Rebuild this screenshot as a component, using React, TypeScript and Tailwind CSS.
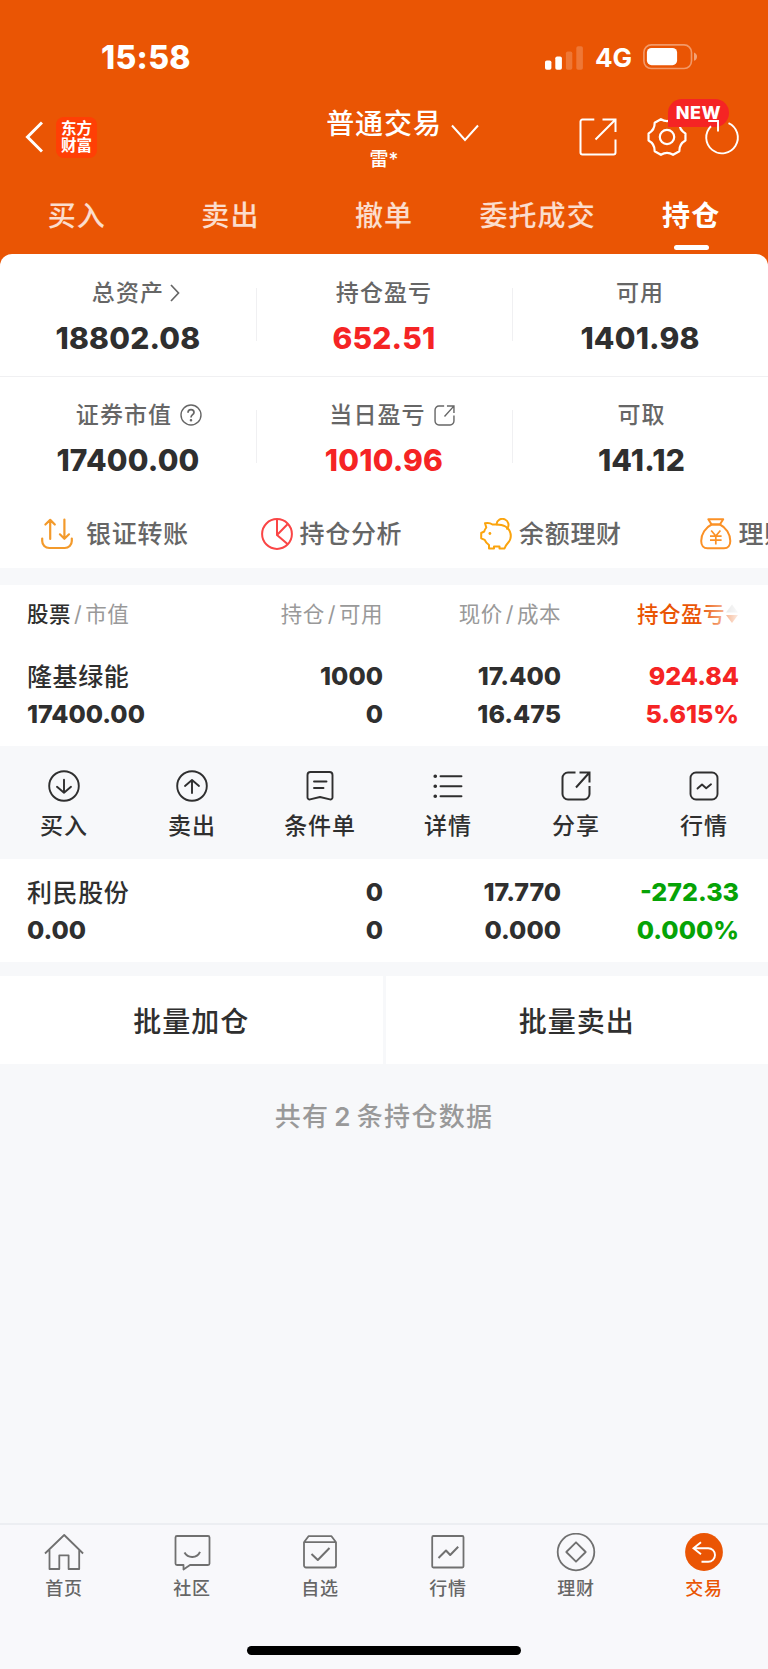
import type { ReactNode } from "react";
import { clsx } from "clsx";

const tabs = ["买入", "卖出", "撤单", "委托成交", "持仓"];

/* ---------- icons ---------- */

const Signal = () => (
  <svg width="38" height="24" viewBox="0 0 38 24" fill="#fff">
    <rect x="0" y="14.5" width="6.4" height="9.2" rx="1.8" />
    <rect x="10.3" y="10.5" width="6.6" height="13.2" rx="1.8" />
    <rect x="20.9" y="5.4" width="6.4" height="18.3" rx="1.8" opacity=".2" />
    <rect x="31.3" y="0.2" width="6.6" height="23.5" rx="1.8" opacity=".2" />
  </svg>
);

const Battery = () => (
  <svg width="54" height="26" viewBox="0 0 54 26">
    <rect x="0.9" y="0.9" width="47.6" height="23.6" rx="7.4" fill="none" stroke="#fff" strokeOpacity=".4" strokeWidth="1.6" />
    <rect x="3.9" y="4" width="30.2" height="17.2" rx="4.6" fill="#fff" />
    <path d="M51 8.600c2 .8 3 2.200 3 4.100s-1 3.300-3 4.100z" fill="#fff" opacity=".45" />
  </svg>
);

const ShareSquare = () => (
  <svg width="38" height="38" viewBox="0 0 38 38" fill="none" stroke="#fff" strokeWidth="2">
    <path d="M15.300 1.500H3.500a2 2 0 0 0-2 2v31a2 2 0 0 0 2 2h31a2 2 0 0 0 2-2V21.500" />
    <path d="M23.500 1.500h13v12.500M36 2L16.500 21.500" />
  </svg>
);

const polar = (deg: number, r: number) => {
  const a = (deg * Math.PI) / 180;
  return `${(r * Math.cos(a)).toFixed(2)} ${(r * Math.sin(a)).toFixed(2)}`;
};

// six wide teeth joined by shallow curved valleys
const gearPath =
  `M${polar(-11, 18.8)}` +
  [0, 60, 120, 180, 240, 300].map((a) => `L${polar(a + 11, 18.8)}Q${polar(a + 30, 14)} ${polar(a + 49, 18.8)}`).join("") +
  "Z";

const Gear = () => (
  <svg width="40" height="40" viewBox="-20 -20 40 40" fill="none" stroke="#fff" strokeWidth="2.200" strokeLinejoin="round">
    <path d={gearPath} />
    <circle r="7.200" />
  </svg>
);

const Refresh = () => (
  <svg width="38" height="38" viewBox="0 0 38 38" fill="none" stroke="#fff" strokeWidth="1.900">
    <path d="M25.500 5.100A15.800 15.800 0 1 1 8 8.200" />
    <path d="M5.200 3H15v10.500" />
  </svg>
);

const ShareRound = ({ size, stroke }: { size: number; stroke: string }) => (
  <svg width={size} height={size} viewBox="0 0 30 30" fill="none" stroke={stroke} strokeWidth="2">
    <path d="M14.500 1.500H7A5.500 5.500 0 0 0 1.500 7v16A5.500 5.500 0 0 0 7 28.500h16a5.500 5.500 0 0 0 5.500-5.500v-8" />
    <path d="M18.500 1.500h10v10M28 2L15 16.500" />
  </svg>
);

const Question = () => (
  <svg width="22" height="22" viewBox="0 0 22 22" fill="none" stroke="#666" strokeWidth="1.400">
    <circle cx="11" cy="11" r="10" />
    <path d="M8 8.800C8 6.800 9.200 5.700 11 5.700s3 1.100 3 2.700c0 2.200-3 2.500-3 5" strokeWidth="1.700" />
    <circle cx="11" cy="16.200" r=".6" fill="#666" />
  </svg>
);

const Transfer = () => (
  <svg width="32" height="32" viewBox="0 0 32 32" fill="none" stroke="#f39a2b" strokeWidth="2.200" strokeLinecap="round" strokeLinejoin="round">
    <path d="M4.400 6.500L9.200 1.900l4.600 4.600M9.200 2v19M23.400 1.500v19M18.900 16.300l4.500 4.500 4.600-4.500" />
    <path d="M1.200 20.500v2.500a7 7 0 0 0 7 7h15.600a7 7 0 0 0 7-7v-2.500" />
  </svg>
);

const Pie = () => (
  <svg width="32" height="32" viewBox="0 0 32 32" fill="none" stroke="#fa4545" strokeWidth="2">
    <circle cx="16" cy="16" r="14.900" />
    <path d="M16 1v16l10.800 9.300M16 17L26.500 6.300" />
  </svg>
);

const Piggy = () => (
  <svg width="32" height="32" viewBox="0 0 32 32" fill="none" stroke="#fba40d" strokeWidth="2" strokeLinejoin="round" strokeLinecap="round">
    <path d="M16 6.500h-3.500C10.500 5 8.500 4.500 5 5.200l1.300 4.300c-1 1.300-1.700 2.500-2.100 4L1.200 15v5.300l3.500 1.500c1 2.500 2.500 4 4.300 5.200v3.500h5V28.600h5.500v1.900h5c.7-2 1.500-3.500 3-5 2-2 3.300-4.500 3.300-7.500 0-4-2-7.300-5.300-9.500C22.500 6.700 20 6.500 16 6.500z" />
    <path d="M16.500 6.300a6 6 0 1 1 10.500 4.500" />
    <circle cx="9.900" cy="15.500" r="1.400" fill="#fba40d" stroke="none" />
  </svg>
);

const MoneyBag = () => (
  <svg width="32" height="32" viewBox="0 0 32 32" fill="none" stroke="#fb9126" strokeWidth="2" strokeLinejoin="round">
    <path d="M8.300 1.300h14.900l-3.300 5.200h-8.300z" />
    <path d="M11.600 6.500C5.500 9.500 1.200 16 1.200 23c0 4.300 2.300 7.300 6.300 7.300h16.500c4 0 6.300-3 6.300-7.300 0-7-4.300-13.500-10.400-16.500z" />
    <path d="M11.200 12.500l4.600 5.500 4.600-5.500M10 18.200h11.600M10 22.200h11.600M15.800 18v8.500" strokeWidth="1.700" />
  </svg>
);

const Box32 = ({ children }: { children: ReactNode }) => (
  <svg width="32" height="32" viewBox="0 0 32 32" fill="none" stroke="#2f2f2f" strokeWidth="1.900" strokeLinecap="round" strokeLinejoin="round">
    {children}
  </svg>
);

const Nav40 = ({ children }: { children: ReactNode }) => (
  <svg width="40" height="40" viewBox="0 0 40 40" fill="none" stroke="#707070" strokeWidth="1.800" strokeLinejoin="round">
    {children}
  </svg>
);

/* ---------- data ---------- */

const shortcuts = [
  { label: "银证转账", icon: <Transfer />, gap: "gap-[13px]" },
  { label: "持仓分析", icon: <Pie />, gap: "gap-[7px]" },
  { label: "余额理财", icon: <Piggy />, gap: "gap-[7px]" },
  { label: "理财", icon: <MoneyBag />, gap: "gap-[7px]" },
];

const actions = [
  {
    label: "买入",
    icon: <Box32><circle cx="16" cy="16" r="14.800" /><path d="M16 9.800v13M9 16.800l7 6 7-6" /></Box32>,
  },
  {
    label: "卖出",
    icon: <Box32><circle cx="16" cy="16" r="14.800" /><path d="M16 23V10M9 16l7-6 7 6" /></Box32>,
  },
  {
    label: "条件单",
    icon: (
      <Box32>
        <path d="M6.500 2h19a3 3 0 0 1 3 3v22.500a2 2 0 0 1-2.600 1.900L16 27l-9.900 2.400a2 2 0 0 1-2.600-1.900V5a3 3 0 0 1 3-3z" />
        <path d="M10 11.500h12.500M10 18h9.500" />
      </Box32>
    ),
  },
  {
    label: "详情",
    icon: (
      <Box32>
        <path d="M8.500 6.200h21M8.500 16.200h21M8.500 26.200h21" />
        <path d="M3.200 6.200h.1M3.200 16.200h.1M3.200 26.200h.1" strokeWidth="3.600" />
      </Box32>
    ),
  },
  { label: "分享", icon: <ShareRound size={30} stroke="#2f2f2f" /> },
  {
    label: "行情",
    icon: (
      <Box32>
        <rect x="2.500" y="2.500" width="27" height="27" rx="5.500" />
        <path d="M9.500 18.500l4.500-4 4.200 3.800 4.800-4" />
      </Box32>
    ),
  },
];

const navItems = [
  { label: "首页", icon: <Nav40><path d="M1 20.500L20.200 2l18.900 18.500M5.500 17v19h9.800V22.300h9.300V36h10.600V17" /></Nav40> },
  {
    label: "社区",
    icon: (
      <Nav40>
        <path d="M5 3h31a1.500 1.500 0 0 1 1.500 1.500v26A1.500 1.500 0 0 1 36 32H18l-6.500 4.500V32H5a1.500 1.500 0 0 1-1.500-1.500v-26A1.500 1.500 0 0 1 5 3z" />
        <path d="M12.500 19.500c3.500 6 12.500 6 15.500-.7" strokeWidth="2" />
      </Nav40>
    ),
  },
  {
    label: "自选",
    icon: (
      <Nav40>
        <path d="M4 9.200L8.500 3.200h23L36 9.200V32.500a2 2 0 0 1-2 2H6a2 2 0 0 1-2-2zM4 9.200h32" />
        <path d="M11.500 21l6.300 6L29.500 15" strokeWidth="2" />
      </Nav40>
    ),
  },
  {
    label: "行情",
    icon: (
      <Nav40>
        <rect x="4.200" y="3" width="31.300" height="31.500" rx="1.200" />
        <path d="M10.500 25l7.500-7.500 4.200 4.500 8-8.300" strokeWidth="2" />
      </Nav40>
    ),
  },
  {
    label: "理财",
    icon: <Nav40><circle cx="20" cy="19" r="18.300" /><path d="M20 9.300l9.700 9.700-9.700 9.700L10.300 19z" /></Nav40>,
  },
  {
    label: "交易",
    active: true,
    icon: (
      <svg width="40" height="40" viewBox="0 0 40 40" fill="none" stroke="#fff" strokeWidth="1.900">
        <circle cx="20" cy="19" r="18.900" fill="#ea5504" stroke="none" />
        <path d="M17 9.300L9.500 15.200l7.500 6M9.500 15.200h14.700a6.800 6.800 0 0 1 0 13.600h-6.700" />
      </svg>
    ),
  },
];

const holdings = [
  { name: "隆基绿能", value: "17400.00", qty: "1000", avail: "0", price: "17.400", cost: "16.475", pl: "924.84", pct: "5.615%", color: "text-[#f52424]" },
  { name: "利民股份", value: "0.00", qty: "0", avail: "0", price: "17.770", cost: "0.000", pl: "-272.33", pct: "0.000%", color: "text-[#06a306]" },
];

/* ---------- pieces ---------- */

function Stat({ label, value, red, icon, shift }: { label: string; value: string; red?: boolean; icon?: ReactNode; shift?: string }) {
  return (
    <div className="flex flex-col items-center">
      <div className={clsx("flex h-[22px] items-center text-[23px] font-medium leading-[22px] tracking-[1.100px] text-[#666]", shift)}>
        {label}
        {icon}
      </div>
      <div className={clsx("mt-[22px] text-[30px] font-extrabold leading-[24px] tracking-[0.200px]", red ? "text-[#f52424]" : "text-[#2f2f2f]")}>{value}</div>
    </div>
  );
}

const Slash = () => <span className="mx-[3px]">/</span>;

const cols = "grid grid-cols-[177px_179px_178px_178px]";

function Holding({ h }: { h: (typeof holdings)[number] }) {
  return (
    <div className={clsx(cols, "pl-[27px] text-right text-[25px] font-[760] leading-[38px] text-[#2f2f2f]")}>
      <div className="text-left">
        <div className="font-medium tracking-[0.600px]">{h.name}</div>
        <div className="-mt-px">{h.value}</div>
      </div>
      <div className="-mt-px">
        <div>{h.qty}</div>
        <div>{h.avail}</div>
      </div>
      <div className="-mt-px">
        <div>{h.price}</div>
        <div>{h.cost}</div>
      </div>
      <div className={clsx("-mt-px", h.color)}>
        <div>{h.pl}</div>
        <div>{h.pct}</div>
      </div>
    </div>
  );
}

export default function App() {
  return (
    <div className="flex h-[1669px] w-[768px] flex-col overflow-hidden bg-[#f7f8fa] font-['Inter','Noto_Sans_CJK_SC',sans-serif] whitespace-nowrap">
      {/* Header */}
      <header className="h-[254px] bg-[#ea5504] text-white">
        <div className="flex h-[97px] items-center pl-[101px] pt-[18px]">
          <span className="w-[92px] text-[32px] font-extrabold leading-[32px] tracking-[0.300px]">15:58</span>
          <div className="ml-[352px] flex items-center">
            <Signal />
            <span className="ml-[12px] w-[37px] text-[26px] font-bold leading-[26px]">4G</span>
            <span className="ml-[11px] mt-[-1px]"><Battery /></span>
          </div>
        </div>

        <div className="flex h-[80px] items-center pl-[25px]">
          <svg width="18" height="32" viewBox="0 0 18 32" fill="none" stroke="#fff" strokeWidth="3">
            <path d="M17 1.500L2.500 16 17 30.500" />
          </svg>
          <div className="ml-[13px] flex h-[41px] w-[41px] flex-col items-center justify-center rounded-[8px] bg-[#ff3f05] text-[15.500px] font-bold leading-[17px]">
            <span>东方</span>
            <span>财富</span>
          </div>
          <div className="ml-[227px] flex h-full w-[120px] flex-col items-center pt-[12px]">
            <span className="text-[28px] font-medium leading-[30px] tracking-[0.900px]">普通交易</span>
            <span className="mt-[10px] text-[19px] font-medium leading-[22px]">雷*</span>
          </div>
          <svg className="ml-[7px] mt-[-9px]" width="28" height="18" viewBox="0 0 28 18" fill="none" stroke="#fff" strokeWidth="2">
            <path d="M1 1.500l13 14.500L27 1.500" />
          </svg>
          <div className="ml-[100px]"><ShareSquare /></div>
          <div className="relative ml-[30px]">
            <Gear />
            <span className="absolute left-[21px] top-[-18px] flex h-[28px] w-[61px] items-center justify-center rounded-[14px] rounded-bl-none bg-[#f52424] text-[18px] font-extrabold leading-none tracking-[0.500px]">
              NEW
            </span>
          </div>
          <div className="relative ml-[16px]"><Refresh /></div>
        </div>

        <nav className="grid h-[77px] grid-cols-5">
          {tabs.map((t, i) => (
            <div
              key={t}
              className={clsx(
                "flex flex-col items-center pt-[23px] text-[28px] leading-[32px] tracking-[1.100px]",
                i === 4 ? "font-bold" : "font-medium text-white/80"
              )}
            >
              {t}
              {i === 4 && <span className="mt-[13px] h-[5px] w-[35px] rounded-full bg-white" />}
            </div>
          ))}
        </nav>
      </header>

      {/* Account summary */}
      <div className="bg-[#ea5504]">
        <section className="h-[314px] rounded-t-[12px] bg-white">
          <div className="grid h-[123px] grid-cols-3 border-b border-[#f0f0f2] pt-[28px]">
            <Stat
              label="总资产"
              value="18802.08"
              shift="pl-[16px]"
              icon={
                <svg className="ml-[6px]" width="10" height="18" viewBox="0 0 10 18" fill="none" stroke="#666" strokeWidth="1.700">
                  <path d="M1 1l7.500 8L1 17" />
                </svg>
              }
            />
            <div className="relative">
              <Stat label="持仓盈亏" value="652.51" red />
              <span className="absolute left-0 top-[6px] h-[53px] w-px bg-[#f0f0f2]" />
              <span className="absolute right-[-1px] top-[6px] h-[53px] w-px bg-[#f0f0f2]" />
            </div>
            <Stat label="可用" value="1401.98" />
          </div>
          <div className="grid h-[114px] grid-cols-3 pt-[27px]">
            <Stat label="证券市值" value="17400.00" shift="pl-[22px]" icon={<span className="ml-[8px]"><Question /></span>} />
            <div className="relative">
              <Stat label="当日盈亏" value="1010.96" red shift="pl-[16px]" icon={<span className="ml-[8px]"><ShareRound size={21} stroke="#666" /></span>} />
              <span className="absolute left-0 top-[6px] h-[53px] w-px bg-[#f0f0f2]" />
              <span className="absolute right-[-1px] top-[6px] h-[53px] w-px bg-[#f0f0f2]" />
            </div>
            <div className="pl-[3px]"><Stat label="可取" value="141.12" /></div>
          </div>
          <div className="flex h-[77px] items-center overflow-hidden pl-[41px] pt-[8px]">
            {shortcuts.map((s) => (
              <div key={s.label} className={clsx("flex w-[219.500px] shrink-0 items-center text-[25px] font-medium leading-[32px] tracking-[0.700px] text-[#666]", s.gap)}>
                {s.icon}
                {s.label}
              </div>
            ))}
          </div>
        </section>
      </div>

      {/* Holdings */}
      <section className="mt-[17px] h-[161px] bg-white">
        <div className={clsx(cols, "pl-[27px] pt-[13px] text-right text-[21.500px] leading-[32px] tracking-[0.500px] text-[#999]")}>
          <div className="text-left"><span className="font-medium text-[#2f2f2f]">股票</span><Slash />市值</div>
          <div>持仓<Slash />可用</div>
          <div>现价<Slash />成本</div>
          <div className="relative flex items-center justify-end font-medium text-[#ea5504]">
            持仓盈亏
            <svg width="14" height="20" viewBox="0 0 14 20">
              <path d="M7 0.500L13 8.500H1z" fill="#ccc" />
              <path d="M7 19L13 11H1z" fill="#ea5504" />
            </svg>
            <span className="absolute right-0 top-0 h-full w-[38px] bg-linear-to-r from-white/0 to-white/90" />
          </div>
        </div>
        <div className="mt-[28px]"><Holding h={holdings[0]} /></div>
      </section>

      <section className="grid h-[113px] grid-cols-6 pt-[24px]">
        {actions.map((a) => (
          <div key={a.label} className="flex flex-col items-center text-[23px] font-medium leading-[30px] tracking-[0.900px] text-[#2f2f2f]">
            <span className="flex h-[32px] items-center">{a.icon}</span>
            <span className="mt-[9px]">{a.label}</span>
          </div>
        ))}
      </section>

      <section className="h-[103px] bg-white pt-[15px]"><Holding h={holdings[1]} /></section>

      <section className="mt-[14px] grid h-[88px] grid-cols-2 gap-[3px] text-[28px] font-medium tracking-[1px] text-[#2f2f2f]">
        <button className="bg-white pt-[4px]">批量加仓</button>
        <button className="bg-white pt-[4px]">批量卖出</button>
      </section>

      <p className="mt-[37px] text-center text-[26px] font-medium leading-[32px] tracking-[1.300px] text-[#999]">
        共有<span className="mx-[5px] font-semibold">2</span>条持仓数据
      </p>

      {/* Bottom bar */}
      <footer className="mt-auto h-[146px] border-t-2 border-[#eceef2] bg-[#f8f8fb]">
        <div className="grid grid-cols-6 pt-[8px]">
          {navItems.map((n) => (
            <div key={n.label} className={clsx("flex flex-col items-center text-[18px] font-medium leading-[24px] tracking-[0.800px]", n.active ? "text-[#ea5504]" : "text-[#666]")}>
              {n.icon}
              <span className="mt-[4px]">{n.label}</span>
            </div>
          ))}
        </div>
        <div className="mx-auto mt-[45px] h-[9px] w-[274px] rounded-full bg-black" />
      </footer>
    </div>
  );
}
